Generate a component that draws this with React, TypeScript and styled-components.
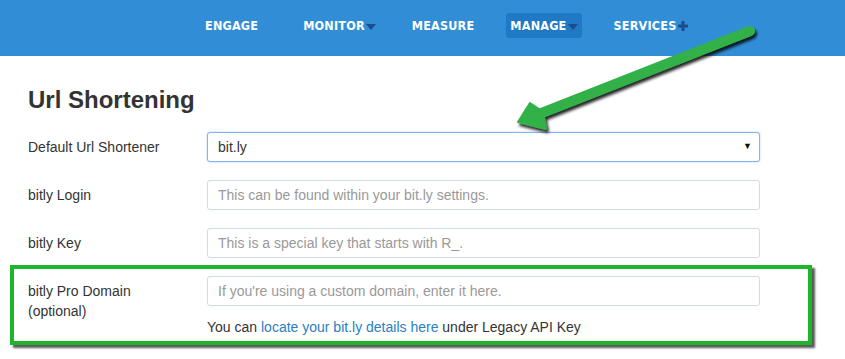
import styled, { createGlobalStyle } from 'styled-components';

const GlobalStyle = createGlobalStyle`
  body {
    margin: 0;
    background: #ffffff;
    font-family: 'Liberation Sans', Arial, sans-serif;
  }
`;

type NavEntry = {
  label: string;
  marker?: 'caret' | 'plus';
  active?: boolean;
};

const navItems: NavEntry[] = [
  { label: 'ENGAGE' },
  { label: 'MONITOR', marker: 'caret' },
  { label: 'MEASURE' },
  { label: 'MANAGE', marker: 'caret', active: true },
  { label: 'SERVICES', marker: 'plus' },
];

const App = () => {
  return (
    <Page>
      <GlobalStyle />
      <Header>
        <Nav>
          {navItems.map((item) => (
            <NavItem key={item.label} $active={item.active}>
              {item.label}
              {item.marker === 'caret' && <Caret />}
              {item.marker === 'plus' && (
                <PlusIcon viewBox="0 0 10 10" width="10" height="10">
                  <rect x="3.5" y="0" width="3" height="10" />
                  <rect x="0" y="3.5" width="10" height="3" />
                </PlusIcon>
              )}
            </NavItem>
          ))}
        </Nav>
      </Header>

      <Content>
        <Title>Url Shortening</Title>

        <Row>
          <Label>Default Url Shortener</Label>
          <SelectWrap>
            <Select defaultValue="bitly">
              <option value="bitly">bit.ly</option>
            </Select>
            <SelectArrow>▼</SelectArrow>
          </SelectWrap>
        </Row>

        <Row>
          <Label>bitly Login</Label>
          <Input placeholder="This can be found within your bit.ly settings." />
        </Row>

        <Row>
          <Label>bitly Key</Label>
          <Input placeholder="This is a special key that starts with R_." />
        </Row>

        <Highlight>
          <Label>
            bitly Pro Domain
            <br />
            (optional)
          </Label>
          <Field>
            <Input placeholder="If you're using a custom domain, enter it here." />
            <Help>
              You can <HelpLink href="#">locate your bit.ly details here</HelpLink> under Legacy API Key
            </Help>
          </Field>
        </Highlight>
      </Content>

      <Annotation width="845" height="359" viewBox="0 0 845 359">
        <defs>
          <filter id="arrowShadow" x="-10%" y="-20%" width="130%" height="150%">
            <feDropShadow dx="2" dy="3" stdDeviation="1.6" floodColor="#000" floodOpacity="0.85" />
          </filter>
        </defs>
        <g filter="url(#arrowShadow)" fill="#33b14a" stroke="#33b14a">
          <line x1="750" y1="31" x2="539" y2="114" strokeWidth="10" strokeLinecap="round" />
          <polygon points="518,122 530,103 543,112 546,129" strokeWidth="2" strokeLinejoin="round" />
        </g>
      </Annotation>
    </Page>
  );
};

export default App;

const Page = styled.div`
  position: relative;
  width: 845px;
  height: 359px;
  overflow: hidden;
  background: #ffffff;
`;

const Header = styled.header`
  height: 56px;
  background: #318ed6;
  display: flex;
  align-items: flex-start;
`;

const Nav = styled.nav`
  display: flex;
  align-items: center;
  gap: 28px;
  padding: 13px 0 0 201px;
`;

const NavItem = styled.a<{ $active?: boolean }>`
  display: flex;
  align-items: center;
  height: 25px;
  padding: 0 4px;
  border-radius: 3px;
  background: ${(p) => (p.$active ? '#2079c4' : 'transparent')};
  color: #ffffff;
  font-family: 'DejaVu Sans', sans-serif;
  font-stretch: condensed;
  font-weight: 700;
  font-size: 12.5px;
  letter-spacing: 0.2px;
  cursor: pointer;

  &:first-child {
    margin-right: 9px;
  }
`;

const Caret = styled.span`
  width: 0;
  height: 0;
  margin: 3px 0 0 1px;
  border-left: 5px solid transparent;
  border-right: 5px solid transparent;
  border-top: 6px solid #1b4d8c;
`;

const PlusIcon = styled.svg`
  margin: 1px 0 0 2px;
  fill: #1b4d8c;
`;

const Content = styled.main`
  width: 802px;
  padding-left: 10px;
`;

const Title = styled.h2`
  margin: 31px 0 19px 18px;
  font-size: 24px;
  line-height: 26px;
  font-weight: 700;
  color: #333333;
`;

const Row = styled.div`
  display: grid;
  grid-template-columns: 179px 1fr;
  padding: 0 52px 0 18px;
  margin-bottom: 18px;
`;

const Highlight = styled.div`
  display: grid;
  grid-template-columns: 179px 1fr;
  margin-top: -11px;
  padding: 7px 48px 4px 14px;
  border: 4px solid #1cb52b;
  box-shadow: 3px 3px 2px rgba(0, 0, 0, 0.65);
`;

const Label = styled.label`
  padding-top: 5px;
  font-size: 14px;
  line-height: 20px;
  color: #333333;
`;

const Field = styled.div`
  display: flex;
  flex-direction: column;
`;

const Input = styled.input`
  box-sizing: border-box;
  width: 100%;
  height: 30px;
  padding: 0 10px;
  border: 1px solid #d3dbe4;
  border-radius: 3px;
  font-family: 'Liberation Sans', Arial, sans-serif;
  font-size: 14px;
  color: #555555;
  background: #ffffff;
  outline: none;

  &::placeholder {
    color: #999999;
  }
`;

const SelectWrap = styled.div`
  position: relative;
`;

const Select = styled.select`
  box-sizing: border-box;
  width: 100%;
  height: 30px;
  padding: 0 10px;
  border: 1px solid #86b3ee;
  border-radius: 3px;
  box-shadow: 0 0 2px rgba(102, 160, 233, 0.6);
  appearance: none;
  background: #ffffff;
  font-family: 'Liberation Sans', Arial, sans-serif;
  font-size: 14px;
  color: #333333;
  outline: none;
`;

const SelectArrow = styled.span`
  position: absolute;
  right: 8px;
  top: 9px;
  font-size: 9px;
  color: #111111;
  pointer-events: none;
`;

const Help = styled.p`
  margin: 11px 0 0;
  font-size: 14px;
  line-height: 20px;
  color: #333333;
`;

const HelpLink = styled.a`
  color: #2a80c3;
  text-decoration: none;
`;

const Annotation = styled.svg`
  position: absolute;
  top: 0;
  left: 0;
  pointer-events: none;
`;
